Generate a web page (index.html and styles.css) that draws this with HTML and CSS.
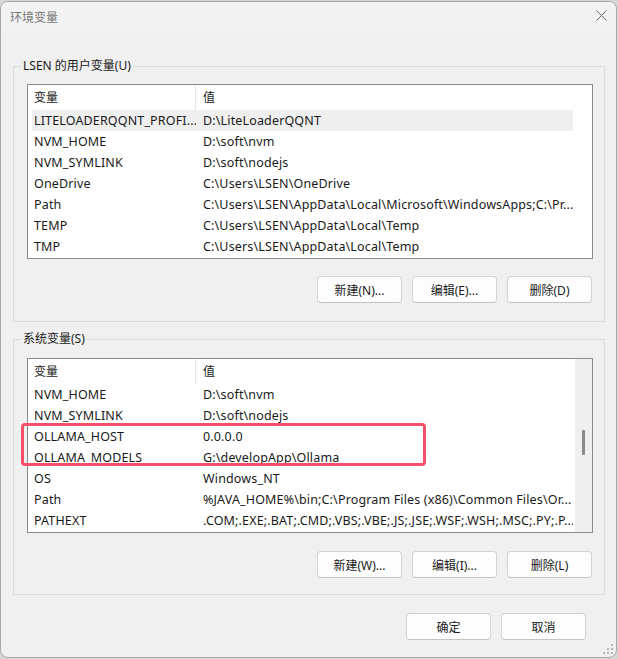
FILE: index.html
```html
<!DOCTYPE html>
<html lang="zh-CN">
<head>
    <meta charset="UTF-8">
    <title>环境变量</title>
    <link rel="stylesheet" href="styles.css">
</head>
<body>
    <div class="window">
        <div class="titlebar">
            <span class="title">环境变量</span>
            <svg class="close" width="11" height="11" viewBox="0 0 11 11">
                <path d="M0.5 0.5 L10.5 10.5 M10.5 0.5 L0.5 10.5" stroke="#6b6b6b" stroke-width="1" fill="none"/>
            </svg>
        </div>

        <div class="content">
            <fieldset class="group">
                <legend>LSEN 的用户变量(U)</legend>
                <div class="list">
                    <div class="list-body">
                        <div class="row head">
                            <span class="cell">变量</span>
                            <span class="cell">值</span>
                        </div>
                        <div class="row selected">
                            <span class="cell">LITELOADERQQNT_PROFI...</span>
                            <span class="cell">D:\LiteLoaderQQNT</span>
                        </div>
                        <div class="row"><span class="cell">NVM_HOME</span><span class="cell">D:\soft\nvm</span></div>
                        <div class="row"><span class="cell">NVM_SYMLINK</span><span class="cell">D:\soft\nodejs</span></div>
                        <div class="row"><span class="cell">OneDrive</span><span class="cell">C:\Users\LSEN\OneDrive</span></div>
                        <div class="row"><span class="cell">Path</span><span class="cell">C:\Users\LSEN\AppData\Local\Microsoft\WindowsApps;C:\Pr...</span></div>
                        <div class="row"><span class="cell">TEMP</span><span class="cell">C:\Users\LSEN\AppData\Local\Temp</span></div>
                        <div class="row"><span class="cell">TMP</span><span class="cell">C:\Users\LSEN\AppData\Local\Temp</span></div>
                    </div>
                </div>
                <div class="buttons">
                    <button class="btn">新建(N)...</button>
                    <button class="btn">编辑(E)...</button>
                    <button class="btn">删除(D)</button>
                </div>
            </fieldset>

            <fieldset class="group system">
                <legend>系统变量(S)</legend>
                <div class="list">
                    <div class="list-body">
                        <div class="row head">
                            <span class="cell">变量</span>
                            <span class="cell">值</span>
                        </div>
                        <div class="row"><span class="cell">NVM_HOME</span><span class="cell">D:\soft\nvm</span></div>
                        <div class="row"><span class="cell">NVM_SYMLINK</span><span class="cell">D:\soft\nodejs</span></div>
                        <div class="row"><span class="cell">OLLAMA_HOST</span><span class="cell">0.0.0.0</span></div>
                        <div class="row"><span class="cell">OLLAMA_MODELS</span><span class="cell">G:\developApp\Ollama</span></div>
                        <div class="row"><span class="cell">OS</span><span class="cell">Windows_NT</span></div>
                        <div class="row"><span class="cell">Path</span><span class="cell">%JAVA_HOME%\bin;C:\Program Files (x86)\Common Files\Or...</span></div>
                        <div class="row"><span class="cell">PATHEXT</span><span class="cell">.COM;.EXE;.BAT;.CMD;.VBS;.VBE;.JS;.JSE;.WSF;.WSH;.MSC;.PY;.P...</span></div>
                    </div>
                    <div class="scrollbar"><div class="thumb"></div></div>
                </div>
                <div class="buttons">
                    <button class="btn">新建(W)...</button>
                    <button class="btn">编辑(I)...</button>
                    <button class="btn">删除(L)</button>
                </div>
            </fieldset>

            <div class="buttons dialog-buttons">
                <button class="btn">确定</button>
                <button class="btn">取消</button>
            </div>
        </div>

        <!-- red annotation box around the OLLAMA rows -->
        <div class="mark"></div>

        <svg class="grip" width="10" height="10" viewBox="0 0 10 10">
            <rect x="8" y="0" width="2" height="2" fill="#b5b5b5"/>
            <rect x="4" y="4" width="2" height="2" fill="#b5b5b5"/>
            <rect x="8" y="4" width="2" height="2" fill="#b5b5b5"/>
            <rect x="0" y="8" width="2" height="2" fill="#b5b5b5"/>
            <rect x="4" y="8" width="2" height="2" fill="#b5b5b5"/>
            <rect x="8" y="8" width="2" height="2" fill="#b5b5b5"/>
        </svg>
    </div>
</body>
</html>
```

FILE: styles.css
```css
body {
    margin: 0;
    background: #d6d6d6;
    font-family: "Noto Sans", "Noto Sans CJK SC", sans-serif;
    font-size: 12px;
    color: #1a1a1a;
}

.window {
    position: relative;
    box-sizing: border-box;
    width: 617px;
    height: 657px;
    margin-top: 1px;
    background: #f0f0f0;
    border: 1px solid #a9a9a9;
    border-radius: 8px;
    overflow: hidden;
}

.titlebar {
    height: 29px;
    display: flex;
    align-items: center;
    justify-content: space-between;
    padding: 0 9px 0 9px;
    background: #f3f3f3;
}

.title {
    color: #777;
    font-size: 12px;
}

.close {
    margin-top: -2px;
}

.content {
    padding: 27px 11px 0 12px;
}

.group {
    margin: 0;
    padding: 0 11px 18px 13px;
    border: 1px solid #dcdcdc;
    min-width: 0;
}

.group legend {
    margin-left: -6px;
    padding: 0 2px;
    line-height: 16px;
    height: 16px;
}

.group.system {
    margin-top: 9px;
    padding-bottom: 16px;
}

.list {
    display: flex;
    box-sizing: border-box;
    height: 175px;
    margin-top: 10px;
    background: #fff;
    border: 1px solid #858b91;
}

.system .list {
    margin-top: 11px;
}

.list-body {
    width: 541px;
    padding-left: 4px;
}

.row {
    display: grid;
    grid-template-columns: 164px 1fr;
    height: 21px;
    line-height: 21px;
    font-size: 12.5px;
    letter-spacing: 0.15px;
    white-space: nowrap;
}

.row .cell {
    padding-left: 2px;
    overflow: hidden;
}

.row .cell + .cell {
    padding-left: 7px;
}

.row.head {
    height: 25px;
    line-height: 25px;
    font-size: 12px;
    letter-spacing: 0;
}

.row.head .cell:first-child {
    border-right: 1px solid #e5e5e5;
}

.row.selected {
    background: #efefef;
}

.scrollbar {
    width: 17px;
    margin-left: auto;
    background: #efefef;
    padding-top: 71px;
}

.thumb {
    width: 3px;
    height: 25px;
    margin-left: 7px;
    background: #8a8a8a;
    border-radius: 1px;
}

.buttons {
    display: flex;
    justify-content: flex-end;
    gap: 10px;
    margin-top: 17px;
    padding-right: 1px;
}

.system .buttons {
    margin-top: 18px;
}

.btn {
    box-sizing: border-box;
    width: 85px;
    height: 27px;
    padding: 0;
    background: #fdfdfd;
    border: 1px solid #d3d3d3;
    border-bottom-color: #c4c4c4;
    border-radius: 4px;
    font-family: inherit;
    font-size: 12px;
    color: #1a1a1a;
}

.dialog-buttons {
    margin-top: 18px;
    padding-right: 19px;
}

.mark {
    position: absolute;
    left: 20px;
    top: 421px;
    width: 405px;
    height: 43px;
    box-sizing: border-box;
    border: 3px solid #f4506a;
    border-radius: 4px;
}

.grip {
    position: absolute;
    right: 3px;
    bottom: 3px;
}
```
